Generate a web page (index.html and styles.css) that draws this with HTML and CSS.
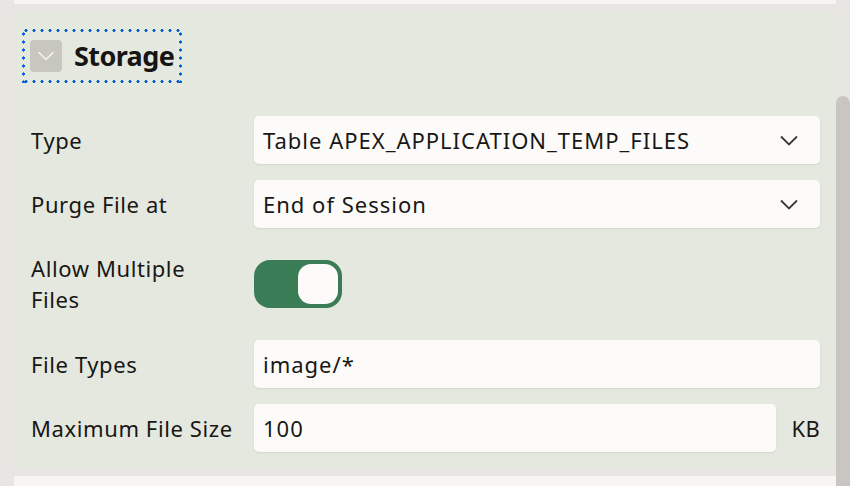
FILE: index.html
```html
<!DOCTYPE html>
<html lang="en">
<head>
<meta charset="utf-8">
<title>Storage</title>
<link rel="stylesheet" href="styles.css">
</head>
<body>
<div class="frame">
  <div class="main">
    <div class="prev-panel"></div>
    <section class="panel">
      <div class="heading">
        <div class="focus">
          <span class="toggle-box">
            <svg width="18" height="10" viewBox="0 0 18 10"><path d="M2 1.5 L9 8.5 L16 1.5" fill="none" stroke="#f4f3ef" stroke-width="1.6" stroke-linecap="round" stroke-linejoin="round"/></svg>
          </span>
          <h2 class="title">Storage</h2>
        </div>
      </div>
      <div class="rows">
        <div class="row">
          <label class="label">Type</label>
          <div class="field select">
            <span>Table APEX_APPLICATION_TEMP_FILES</span>
            <svg class="chev" width="18" height="11" viewBox="0 0 18 11"><path d="M1 1.5 L9 9.5 L17 1.5" fill="none" stroke="#3b3936" stroke-width="1.8"/></svg>
          </div>
        </div>
        <div class="row">
          <label class="label">Purge File at</label>
          <div class="field select">
            <span>End of Session</span>
            <svg class="chev" width="18" height="11" viewBox="0 0 18 11"><path d="M1 1.5 L9 9.5 L17 1.5" fill="none" stroke="#3b3936" stroke-width="1.8"/></svg>
          </div>
        </div>
        <div class="row tall">
          <label class="label">Allow Multiple<br>Files</label>
          <div class="switch"><span class="knob"></span></div>
        </div>
        <div class="row">
          <label class="label">File Types</label>
          <div class="field"><span>image/*</span></div>
        </div>
        <div class="row">
          <label class="label">Maximum File Size</label>
          <div class="field short"><span>100</span></div>
          <span class="unit">KB</span>
        </div>
      </div>
    </section>
    <div class="next-panel"></div>
  </div>
  <div class="scrollbar"><div class="thumb"></div></div>
</div>
</body>
</html>
```

FILE: styles.css
```css
* { box-sizing: border-box; }
html, body {
  margin: 0;
  padding: 0;
  width: 850px;
  height: 486px;
  overflow: hidden;
  background: #e7e6e2;
  font-family: "Noto Sans", "Open Sans", sans-serif;
  color: #1b1a18;
}
.frame {
  display: flex;
  height: 486px;
  padding-left: 14px;
}
.main {
  width: 822px;
  display: flex;
  flex-direction: column;
}
.prev-panel {
  height: 4px;
  background: #f6f5f3;
  margin-bottom: 8px;
}
.panel {
  background: #e5e8df;
  height: 455px;
  padding: 17px 16px 0 17px;
}
.heading {
  display: flex;
  height: 54px;
  margin-left: -9px;
}
.focus {
  display: flex;
  align-items: center;
  gap: 12px;
  width: 160px;
  height: 54px;
  padding-left: 8px;
  background:
    radial-gradient(circle, #0b62d4 1.4px, transparent 1.8px) 0 0 / 8px 3px repeat-x,
    radial-gradient(circle, #0b62d4 1.4px, transparent 1.8px) 0 100% / 8px 3px repeat-x,
    radial-gradient(circle, #0b62d4 1.4px, transparent 1.8px) 0 1px / 3px 8px repeat-y,
    radial-gradient(circle, #0b62d4 1.4px, transparent 1.8px) 100% 1px / 3px 8px repeat-y;
}
.toggle-box {
  width: 32px;
  height: 32px;
  border-radius: 4px;
  background: #c8c7bf;
  display: flex;
  align-items: center;
  justify-content: center;
}
.title {
  margin: 0;
  font-size: 27px;
  font-weight: 700;
  letter-spacing: -0.6px;
  line-height: 32px;
  color: #161513;
}
.rows {
  display: flex;
  flex-direction: column;
  gap: 16px;
  margin-top: 33px;
}
.row {
  display: flex;
  align-items: center;
  min-height: 48px;
}
.row.tall { min-height: 80px; }
.label {
  width: 223px;
  flex: none;
  font-size: 22px;
  line-height: 31px;
  letter-spacing: 0.6px;
  color: #181715;
}
.field {
  flex: 1;
  height: 48px;
  background: #fcfbf9;
  border-radius: 5px;
  box-shadow: 0 1px 2px rgba(0, 0, 0, 0.08);
  display: flex;
  align-items: center;
  justify-content: space-between;
  padding: 0 22px 0 9px;
  font-size: 22px;
  letter-spacing: 1px;
  color: #181715;
}
.field.short { flex: none; width: 522px; }
.unit {
  margin-left: auto;
  font-size: 22px;
  letter-spacing: 0.3px;
  color: #181715;
}
.switch {
  width: 88px;
  height: 48px;
  border-radius: 16px;
  background: #397c55;
  display: flex;
  align-items: center;
  justify-content: flex-end;
  padding-right: 4px;
}
.knob {
  width: 40px;
  height: 40px;
  border-radius: 13px;
  background: #fcfbf9;
}
.next-panel {
  margin-top: 9px;
  flex: 1;
  background: #f6f5f3;
}
.scrollbar {
  width: 14px;
  display: flex;
  flex-direction: column;
  padding-top: 96px;
}
.thumb {
  flex: 1;
  background: #c9c6c1;
  border-radius: 7px 7px 0 0;
}
```
